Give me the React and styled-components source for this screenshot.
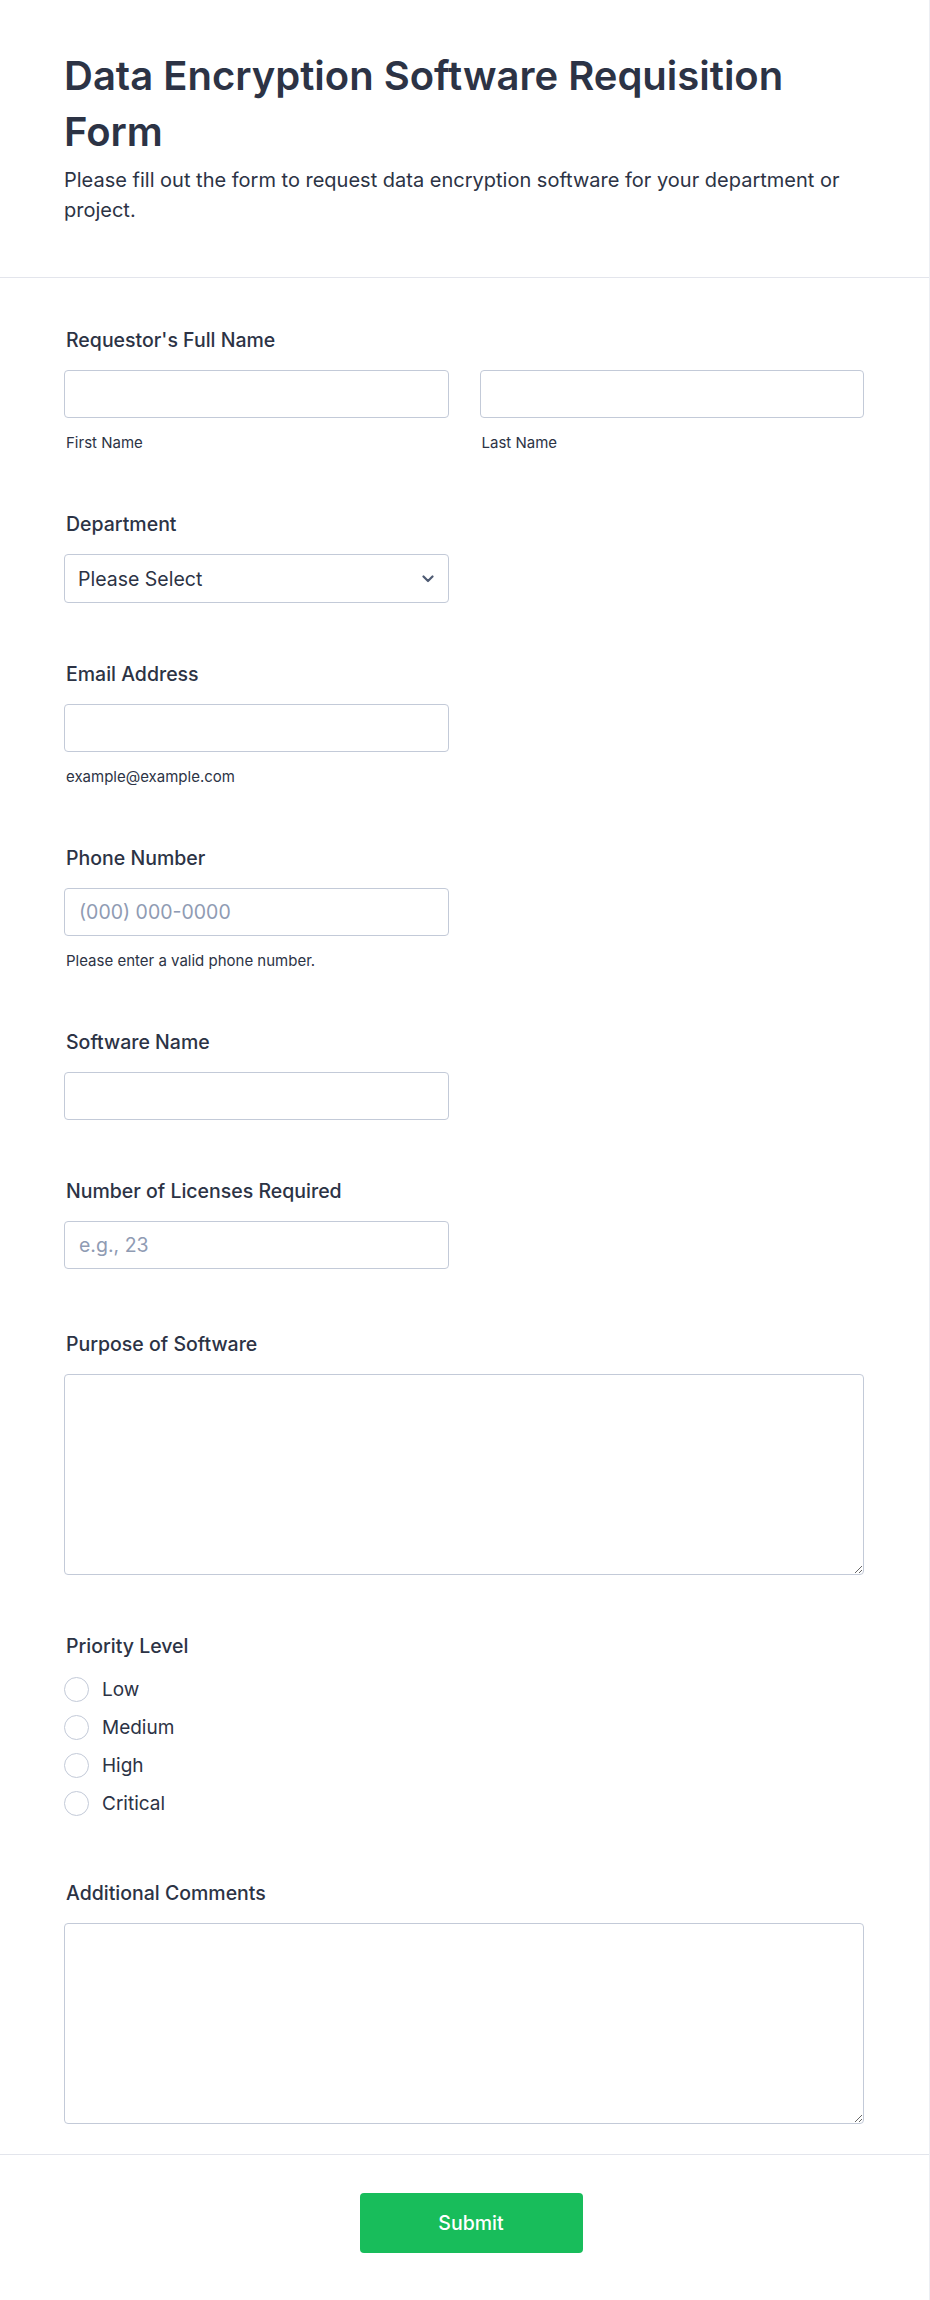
import React from "react";
import styled, { createGlobalStyle } from "styled-components";

const GlobalStyle = createGlobalStyle`
  html, body {
    margin: 0;
    padding: 0;
    background: #ffffff;
  }
  body {
    font-family: Inter, "Noto Sans", "Liberation Sans", sans-serif;
    color: #2c3345;
  }
  * {
    box-sizing: border-box;
  }
`;

const Page = styled.div`
  width: 930px;
  min-height: 2300px;
  background: #fff;
  border-right: 1px solid #eceef3;
`;

const Header = styled.header`
  padding: 48px 64px 52px;
  border-bottom: 1px solid #e3e5ec;
`;

const Title = styled.h1`
  margin: 0;
  font-size: 40px;
  line-height: 56px;
  font-weight: 600;
  color: #2c3345;
`;

const Description = styled.p`
  margin: 5px 0 0;
  font-size: 20px;
  line-height: 30px;
  font-weight: 400;
  color: #2c3345;
`;

const Body = styled.div`
  padding: 49px 65px 30px 64px;
  display: flex;
  flex-direction: column;
  gap: 58px;
  border-bottom: 1px solid #e3e5ec;
`;

const Field = styled.div`
  display: flex;
  flex-direction: column;
  margin-top: ${(p) => p.$offset || "0"};
`;

const Label = styled.label`
  display: block;
  padding-left: 2px;
  font-size: 19.5px;
  line-height: 27px;
  font-weight: 500;
  color: #2c3345;
  margin-bottom: ${(p) => (p.$tight ? "10px" : "16px")};
`;

const Row = styled.div`
  display: grid;
  grid-template-columns: 1fr 1fr;
  gap: 31px;
`;

const Column = styled.div`
  display: flex;
  flex-direction: column;
  width: ${(p) => p.$width || "100%"};
`;

const Input = styled.input`
  width: 100%;
  height: 48px;
  padding: 0 14px;
  border: 1px solid #c3cad8;
  border-radius: 4px;
  font-family: inherit;
  font-size: 19.5px;
  color: #2c3345;
  background: #fff;
  outline: none;

  &::placeholder {
    color: #8f9bb3;
  }
`;

const Sublabel = styled.span`
  display: block;
  margin-top: 15px;
  padding-left: 2px;
  font-size: 15px;
  line-height: 20px;
  color: #2c3345;
`;

const SelectBox = styled.div`
  width: 385px;
  height: 49px;
  border: 1px solid #c3cad8;
  border-radius: 4px;
  display: flex;
  align-items: center;
  justify-content: space-between;
  padding: 0 14px 0 13px;
  font-size: 19.5px;
  color: #2c3345;
`;

const TextArea = styled.textarea`
  width: 100%;
  height: 201px;
  border: 1px solid #c3cad8;
  border-radius: 4px;
  padding: 10px 14px;
  font-family: inherit;
  font-size: 19px;
  color: #2c3345;
  outline: none;
  resize: vertical;
`;

const RadioList = styled.div`
  display: flex;
  flex-direction: column;
`;

const RadioRow = styled.label`
  display: flex;
  align-items: center;
  gap: 13px;
  height: 38px;
  font-size: 19px;
  color: #2c3345;
`;

const RadioCircle = styled.span`
  width: 25px;
  height: 25px;
  border-radius: 50%;
  border: 1px solid #c3cad8;
  background: #fff;
  flex-shrink: 0;
`;

const Footer = styled.div`
  display: flex;
  justify-content: center;
  padding: 38px 0 49px 13px;
`;

const SubmitButton = styled.button`
  width: 223px;
  height: 60px;
  border: none;
  border-radius: 4px;
  background: #18bd5b;
  color: #fff;
  font-family: inherit;
  font-size: 19.5px;
  font-weight: 500;
  cursor: pointer;
`;

const Chevron = () => (
  <svg width="12" height="8" viewBox="0 0 12 8" fill="none">
    <path
      d="M1.5 1.5L6 6L10.5 1.5"
      stroke="#4f5b73"
      strokeWidth="2.2"
      strokeLinecap="round"
      strokeLinejoin="round"
    />
  </svg>
);

const priorities = ["Low", "Medium", "High", "Critical"];

export default function App() {
  return (
    <>
      <GlobalStyle />
      <Page>
        <Header>
          <Title>Data Encryption Software Requisition Form</Title>
          <Description>
            Please fill out the form to request data encryption software for
            your department or project.
          </Description>
        </Header>

        <Body>
          <Field>
            <Label>Requestor's Full Name</Label>
            <Row>
              <Column>
                <Input type="text" />
                <Sublabel>First Name</Sublabel>
              </Column>
              <Column>
                <Input type="text" />
                <Sublabel>Last Name</Sublabel>
              </Column>
            </Row>
          </Field>

          <Field>
            <Label>Department</Label>
            <SelectBox>
              <span>Please Select</span>
              <Chevron />
            </SelectBox>
          </Field>

          <Field>
            <Label>Email Address</Label>
            <Column $width="385px">
              <Input type="email" />
              <Sublabel>example@example.com</Sublabel>
            </Column>
          </Field>

          <Field>
            <Label>Phone Number</Label>
            <Column $width="385px">
              <Input type="tel" placeholder="(000) 000-0000" />
              <Sublabel>Please enter a valid phone number.</Sublabel>
            </Column>
          </Field>

          <Field>
            <Label>Software Name</Label>
            <Column $width="385px">
              <Input type="text" />
            </Column>
          </Field>

          <Field>
            <Label>Number of Licenses Required</Label>
            <Column $width="385px">
              <Input type="text" placeholder="e.g., 23" />
            </Column>
          </Field>

          <Field $offset="4px">
            <Label>Purpose of Software</Label>
            <TextArea />
          </Field>

          <Field>
            <Label $tight>Priority Level</Label>
            <RadioList>
              {priorities.map((p) => (
                <RadioRow key={p}>
                  <RadioCircle />
                  {p}
                </RadioRow>
              ))}
            </RadioList>
          </Field>

          <Field>
            <Label>Additional Comments</Label>
            <TextArea />
          </Field>
        </Body>

        <Footer>
          <SubmitButton>Submit</SubmitButton>
        </Footer>
      </Page>
    </>
  );
}
